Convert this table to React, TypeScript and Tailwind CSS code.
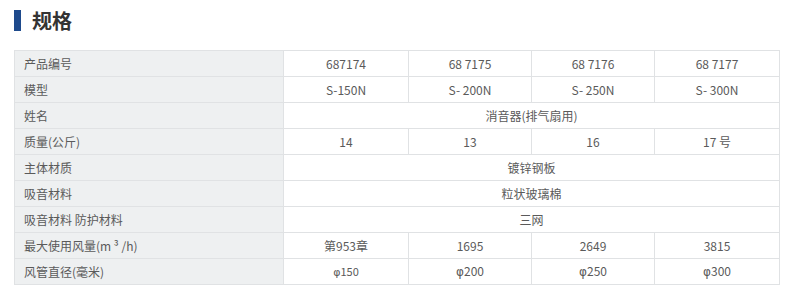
import React from 'react';

type Row = { label: string; values: string[] };

const ROWS: Row[] = [
    { label: '产品编号', values: ['687174', '68 7175', '68 7176', '68 7177'] },
    { label: '模型', values: ['S-150N', 'S- 200N', 'S- 250N', 'S- 300N'] },
    { label: '姓名', values: ['消音器(排气扇用)'] },
    { label: '质量(公斤)', values: ['14', '13', '16', '17 号'] },
    { label: '主体材质', values: ['镀锌钢板'] },
    { label: '吸音材料', values: ['粒状玻璃棉'] },
    { label: '吸音材料 防护材料', values: ['三网'] },
    { label: '最大使用风量(m ³ /h)', values: ['第953章', '1695', '2649', '3815'] },
    { label: '风管直径(毫米)', values: ['φ150', 'φ200', 'φ250', 'φ300'] },
];

export default function App() {
    return (
        <div
            className="w-[800px] h-[296px] bg-white overflow-hidden"
            style={{ fontFamily: '"Noto Sans CJK SC", "Noto Sans", sans-serif' }}
        >
            <div className="flex items-center h-[21px] mt-[10px] ml-[14px]">
                <div className="w-[7px] h-[21px] bg-[#1e4a8c]" />
                <h2 className="ml-[11px] text-[20px] font-bold text-[#333] leading-none">规格</h2>
            </div>

            <table className="mt-[19px] ml-[14px] w-[765px] border-collapse table-fixed text-[12px] text-[#5a5a5a]">
                <colgroup>
                    <col className="w-[269px]" />
                    <col className="w-[125px]" />
                    <col className="w-[123px]" />
                    <col className="w-[123px]" />
                    <col className="w-[125px]" />
                </colgroup>
                <tbody>
                    {ROWS.map((row) => (
                        <tr key={row.label} className="h-[26px]">
                            <td className="border border-[#e0e2e4] bg-[#eef0f1] pl-[9px] leading-none">
                                {row.label}
                            </td>
                            {row.values.length === 1 ? (
                                <td colSpan={4} className="border border-[#e0e2e4] text-center leading-none">
                                    {row.values[0]}
                                </td>
                            ) : (
                                row.values.map((v, i) => (
                                    <td key={i} className="border border-[#e0e2e4] text-center leading-none">
                                        {v.startsWith('φ') ? (
                                            <>
                                                <span style={{ fontFamily: '"DejaVu Sans", sans-serif' }} className={i === 0 ? 'text-[11px]' : 'text-[12px]'}>φ</span>
                                                <span className={i === 0 ? 'text-[11px]' : ''}>{v.slice(1)}</span>
                                            </>
                                        ) : (
                                            v
                                        )}
                                    </td>
                                ))
                            )}
                        </tr>
                    ))}
                </tbody>
            </table>
        </div>
    );
}
